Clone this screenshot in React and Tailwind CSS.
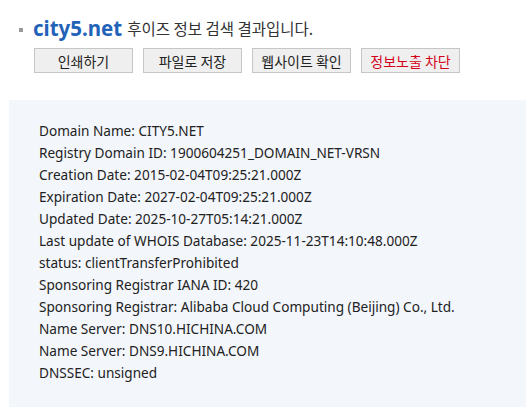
import React from "react";

const lines = [
  "Domain Name: CITY5.NET",
  "Registry Domain ID: 1900604251_DOMAIN_NET-VRSN",
  "Creation Date: 2015-02-04T09:25:21.000Z",
  "Expiration Date: 2027-02-04T09:25:21.000Z",
  "Updated Date: 2025-10-27T05:14:21.000Z",
  "Last update of WHOIS Database: 2025-11-23T14:10:48.000Z",
  "status: clientTransferProhibited",
  "Sponsoring Registrar IANA ID: 420",
  "Sponsoring Registrar: Alibaba Cloud Computing (Beijing) Co., Ltd.",
  "Name Server: DNS10.HICHINA.COM",
  "Name Server: DNS9.HICHINA.COM",
  "DNSSEC: unsigned",
];

const buttons = [
  { label: "인쇄하기" },
  { label: "파일로 저장" },
  { label: "웹사이트 확인" },
  { label: "정보노출 차단", red: true },
];

export default function App() {
  return (
    <div className="h-[408px] w-[526px] overflow-hidden bg-white font-['Noto_Sans','Noto_Sans_CJK_KR',sans-serif] text-[#222]">
      {/* header */}
      <div className="flex items-center pl-[19px] pt-[14px]">
        <span className="mr-[10px] mt-[4px] h-[4px] w-[4px] bg-[#999]" />
        <span className="text-[20.5px] font-bold leading-[28px] text-[#2262b8]">city5.net</span>
        <span className="ml-[5px] mt-[2px] font-['Noto_Sans_CJK_KR',sans-serif] text-[15.5px] text-[#333]">
          후이즈 정보 검색 결과입니다.
        </span>
      </div>

      <div className="ml-[34px] mt-[6px] flex gap-[10px]">
        {buttons.map((b) => (
          <button
            key={b.label}
            className={
              "h-[25px] w-[99px] border border-[#c6c6c6] bg-[#efefef] font-['Noto_Sans_CJK_KR',sans-serif] text-[14px] leading-none " +
              (b.red ? "text-[#d4001a]" : "text-[#222]")
            }
          >
            {b.label}
          </button>
        ))}
      </div>

      {/* whois result */}
      <div className="ml-[9px] mt-[27px] bg-[#f3f6fb] pb-[23px] pl-[30px] pt-[20px] text-[13.6px] leading-[22px]">
        {lines.map((l, i) => (
          <div key={i}>{l}</div>
        ))}
      </div>
    </div>
  );
}
